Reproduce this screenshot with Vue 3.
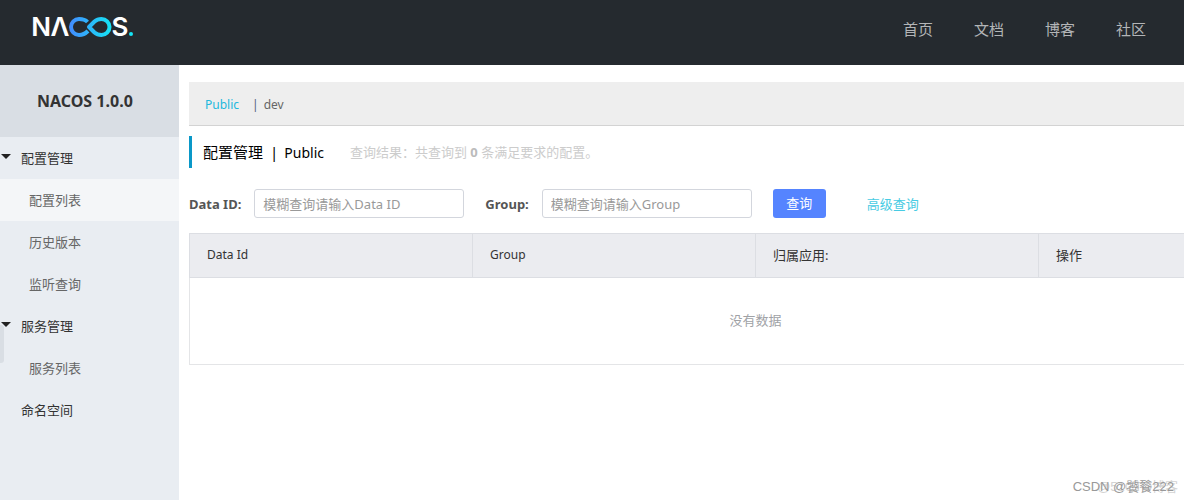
<script setup>
import { ref } from 'vue'

const navLinks = ['首页', '文档', '博客', '社区']
const menu = [
  { label: '配置管理', children: ['配置列表', '历史版本', '监听查询'] },
  { label: '服务管理', children: ['服务列表'] },
  { label: '命名空间', children: [] },
]
const active = ref('配置列表')
const columns = [
  { label: 'Data Id', latin: true },
  { label: 'Group', latin: true },
  { label: '归属应用:', latin: false },
  { label: '操作', latin: false },
]
const dataId = ref('')
const group = ref('')
</script>

<template>
  <div class="page">
    <header class="topbar">
      <a class="brand" href="#" aria-label="NACOS">
        <svg class="logo" width="108" height="40" viewBox="0 0 108 40">
          <defs>
            <linearGradient id="loop" gradientUnits="userSpaceOnUse" x1="38" y1="0" x2="80" y2="0">
              <stop offset="0" stop-color="#438bff" />
              <stop offset="1" stop-color="#15e4f5" />
            </linearGradient>
          </defs>
          <text class="letter" x="10" y="29" text-anchor="middle">N</text>
          <text class="letter" x="29" y="29" text-anchor="middle">Λ</text>
          <g fill="none" stroke="url(#loop)" stroke-width="4">
            <path d="M56.5 15C54.5 12.800 51.500 12 48 12A8 8 0 0 0 48 28C51.500 28 54.500 26.500 57 24" />
            <path d="M58 20L63.500 14.500C65.500 12.700 67.500 12 70.500 12A8 8 0 0 1 70.500 28C67.500 28 65.500 27.300 63.500 25.500Z" stroke-linejoin="round" />
          </g>
          <text class="letter" x="89" y="29" text-anchor="middle">S</text>
          <circle cx="100" cy="27" r="2" fill="#15e4f5" />
        </svg>
      </a>
      <nav class="nav">
        <a v-for="l in navLinks" :key="l" href="#">{{ l }}</a>
      </nav>
    </header>

    <div class="body">
      <aside class="side">
        <h1 class="version">NACOS 1.0.0</h1>
        <ul class="menu">
          <li v-for="m in menu" :key="m.label">
            <a class="item parent" href="#"><span v-if="m.children.length" class="caret"></span>{{ m.label }}</a>
            <ul v-if="m.children.length" class="menu">
              <li v-for="c in m.children" :key="c">
                <a class="item child" :class="{ active: c === active }" href="#" @click.prevent="active = c">{{ c }}</a>
              </li>
            </ul>
          </li>
        </ul>
        <button class="handle" type="button" aria-label="收起"></button>
      </aside>

      <main class="main">
        <div class="spaces">
          <a class="current" href="#">Public</a>
          <span class="bar">|</span>
          <a href="#">dev</a>
        </div>
        <div class="heading">
          <h2>配置管理<span class="sep">|</span><span class="space-name">Public</span></h2>
          <p>查询结果：共查询到 <b>0</b> 条满足要求的配置。</p>
        </div>
        <form class="search" @submit.prevent>
          <label for="data-id">Data ID:</label>
          <input id="data-id" v-model="dataId" type="text" placeholder="模糊查询请输入Data ID" />
          <label for="group">Group:</label>
          <input id="group" v-model="group" type="text" placeholder="模糊查询请输入Group" />
          <button type="submit">查询</button>
          <a href="#">高级查询</a>
        </form>
        <div class="table-wrap">
          <table>
            <thead>
              <tr><th v-for="c in columns" :key="c.label" :class="{ latin: c.latin }" scope="col">{{ c.label }}</th></tr>
            </thead>
            <tbody>
              <tr><td :colspan="columns.length">没有数据</td></tr>
            </tbody>
          </table>
        </div>
      </main>
    </div>
    <div class="mark ghost">@51CTO博客</div>
    <div class="mark">CSDN @饕餮222</div>
  </div>
</template>

<style>
body {
  margin: 0;
  background: #fff;
}
</style>

<style scoped>
.page {
  position: relative;
  display: flex;
  flex-direction: column;
  min-height: 100vh;
  overflow: hidden;
  font: 13px/20px "Noto Sans", "Noto Sans CJK SC", sans-serif;
  color: #333;
}
a {
  color: inherit;
  text-decoration: none;
}
.topbar {
  display: flex;
  justify-content: space-between;
  align-items: flex-start;
  height: 65px;
  padding: 0 38px 0 31px;
  box-sizing: border-box;
  background: #252a2f;
}
.brand {
  margin-top: 7px;
}
.logo {
  display: block;
}
.letter {
  font: 600 26px "Inter", sans-serif;
  fill: #fff;
}
.nav {
  display: flex;
  gap: 41px;
  margin-top: 19px;
  font-size: 15px;
  color: #b3b5b7;
}
.body {
  display: flex;
  flex: 1;
}
.side {
  position: relative;
  flex: 0 0 179px;
  background: #e9edf2;
}
.version {
  margin: 0;
  padding: 26px 0 26px 37px;
  font-size: 16px;
  line-height: 20px;
  background: #d9dee4;
}
.menu {
  margin: 0;
  padding: 0;
  list-style: none;
}
.item {
  display: block;
  position: relative;
  line-height: 42px;
}
.parent {
  padding-left: 21px;
}
.child {
  padding-left: 29px;
  color: #666;
}
.child.active {
  background: #f4f6f8;
}
.caret {
  position: absolute;
  left: 1px;
  top: 17px;
  border: 5px solid transparent;
  border-top-color: #222;
  border-bottom: 0;
}
.handle {
  position: absolute;
  left: 0;
  top: 260px;
  width: 4px;
  height: 38px;
  padding: 0;
  border: 0;
  border-radius: 0 3px 3px 0;
  background: #d9dee4;
}
.main {
  flex: 1;
  min-width: 0;
  padding: 17px 0 0 10px;
}
.spaces {
  display: flex;
  padding: 13px 16px 10px;
  background: #eee;
  border-bottom: 1px solid #d3d3d3;
  font-size: 12px;
  color: #666;
}
.current {
  color: #22b8dd;
}
.bar {
  margin: 0 5px 0 13px;
  color: #546478;
}
.heading {
  display: flex;
  align-items: center;
  height: 32px;
  margin-top: 10px;
  border-left: 3px solid #0a98c8;
}
.heading h2 {
  margin: 0 0 0 11px;
  font-size: 15px;
  font-weight: 400;
  color: #000;
}
.sep {
  margin: 0 6px 0 7px;
}
.space-name {
  font-size: 14px;
}
.heading p {
  margin: 0 0 0 26px;
  color: #ccc;
}
.heading b {
  color: #bbb;
}
.search {
  display: flex;
  align-items: center;
  margin-top: 21px;
}
.search label {
  margin-right: 13px;
  font-weight: 700;
  color: #555;
}
.search input {
  box-sizing: border-box;
  width: 210px;
  height: 29px;
  margin: 0 21px 0 0;
  padding: 0 8px;
  border: 1px solid #d3d6dd;
  border-radius: 3px;
  font: inherit;
  color: #333;
}
.search input::placeholder {
  color: #999;
  opacity: 1;
}
.search button {
  width: 53px;
  height: 29px;
  padding: 0 0 2px;
  border: 0;
  border-radius: 3px;
  background: #5584ff;
  color: #fff;
  font: inherit;
}
.search a {
  margin-left: 41px;
  color: #47cbe3;
}
.table-wrap {
  margin-top: 15px;
  overflow: hidden;
}
table {
  width: 100%;
  min-width: 1133px;
  border-collapse: collapse;
  table-layout: fixed;
  border: 1px solid #e4e5e7;
}
th {
  height: 44px;
  padding: 0 17px 2px;
  box-sizing: border-box;
  font-weight: 400;
  text-align: left;
  background: #ebecf0;
  border: 1px solid #dcdee3;
}
.latin {
  font-size: 12px;
}
td {
  height: 84px;
  padding: 0 0 2px;
  text-align: center;
  color: #a0a2a6;
}
.mark {
  position: absolute;
  right: 10px;
  bottom: 3px;
  font: 13px/20px "Liberation Sans", "Noto Sans CJK SC", sans-serif;
  color: #999;
}
.ghost {
  right: 6px;
  color: #d3d3d3;
}
</style>
